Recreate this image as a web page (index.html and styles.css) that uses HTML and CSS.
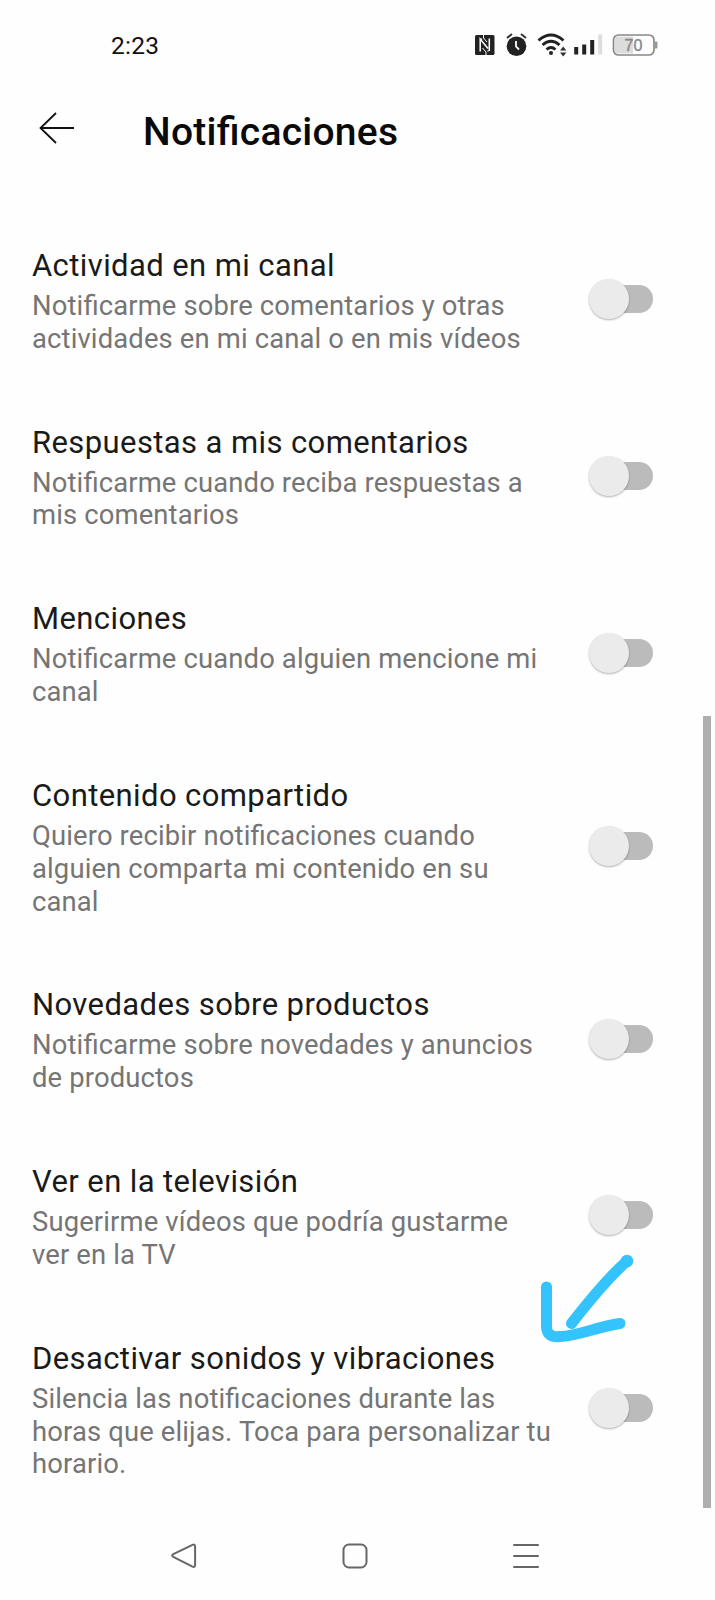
FILE: index.html
```
<!DOCTYPE html>
<html lang="es">
<head>
<meta charset="utf-8">
<title>Notificaciones</title>
<link rel="stylesheet" href="styles.css">
</head>
<body>

<div class="screen">
  <div class="status-bar">
    <span class="time">2:23</span>
    <svg class="status-icons" width="190" height="30" viewBox="0 0 190 30">
      <!-- nfc -->
      <rect x="5" y="5" width="19.500" height="20" rx="1.500" fill="#222"/>
      <path d="M10.200 21.500V9l7.800 9.500M19.300 8.500V21M11.500 9.500v-1M18 21.500v-1" fill="none" stroke="#fff" stroke-width="1.500"/>
      <path d="M13.500 4v4l3.500 4M16 26v-4l-3.500-4" fill="none" stroke="#fff" stroke-width="1"/>
      <!-- alarm -->
      <circle cx="46.500" cy="16.200" r="9.800" fill="#222"/>
      <path d="M37 8l5-4M56 8l-5-4" stroke="#333" stroke-width="2"/>
      <path d="M46 11v5.500l3 3" fill="none" stroke="#fff" stroke-width="1.800"/>
      <!-- wifi -->
      <path d="M68.500 10.500q12.500-11 25 0M72.500 15q8.500-7.500 17 0M76.500 19.500q4.500-4 9 0" fill="none" stroke="#222" stroke-width="2.800"/>
      <circle cx="81" cy="23" r="2" fill="#222"/>
      <path d="M90 20.500l3.200-4 3.200 4zM90 22.500l3.200 4 3.200-4z" fill="#333"/>
      <!-- signal -->
      <path d="M106.200 24.500v-7.500M114.200 24.500v-10M122.200 24.500v-14.500" stroke="#222" stroke-width="4"/>
      <path d="M130.200 24.500v-20" stroke="#ddd" stroke-width="4"/>
      <!-- battery -->
      <path d="M148 6.500h15v17h-15q-3 0-3-3v-11q0-3 3-3z" fill="#dcdcdc"/>
      <rect x="143.500" y="5" width="40.500" height="20" rx="5" fill="none" stroke="#888" stroke-width="1.700"/>
      <path d="M185 11.500h1.500q1 0 1 1v5q0 1-1 1h-1.500z" fill="#999"/>
      <text class="battery-text" x="163.500" y="20.500">70</text>
    </svg>
  </div>

  <div class="header">
    <svg class="back" width="36" height="32" viewBox="0 0 36 32">
      <path d="M1.500 16H35M17 1L1.500 16l15.500 15" fill="none" stroke="#111" stroke-width="1.800"/>
    </svg>
    <h1>Notificaciones</h1>
  </div>

  <div class="list">
    <div class="row">
      <div class="text">
        <h2>Actividad en mi canal</h2>
        <p>Notificarme sobre comentarios y otras<br>actividades en mi canal o en mis vídeos</p>
      </div>
      <div class="toggle"><span class="knob"></span></div>
    </div>
    <div class="row">
      <div class="text">
        <h2>Respuestas a mis comentarios</h2>
        <p>Notificarme cuando reciba respuestas a<br>mis comentarios</p>
      </div>
      <div class="toggle"><span class="knob"></span></div>
    </div>
    <div class="row">
      <div class="text">
        <h2>Menciones</h2>
        <p>Notificarme cuando alguien mencione mi<br>canal</p>
      </div>
      <div class="toggle"><span class="knob"></span></div>
    </div>
    <div class="row">
      <div class="text">
        <h2>Contenido compartido</h2>
        <p>Quiero recibir notificaciones cuando<br>alguien comparta mi contenido en su<br>canal</p>
      </div>
      <div class="toggle"><span class="knob"></span></div>
    </div>
    <div class="row">
      <div class="text">
        <h2>Novedades sobre productos</h2>
        <p>Notificarme sobre novedades y anuncios<br>de productos</p>
      </div>
      <div class="toggle"><span class="knob"></span></div>
    </div>
    <div class="row">
      <div class="text">
        <h2>Ver en la televisión</h2>
        <p>Sugerirme vídeos que podría gustarme<br>ver en la TV</p>
      </div>
      <div class="toggle"><span class="knob"></span></div>
    </div>
    <div class="row">
      <div class="text">
        <h2>Desactivar sonidos y vibraciones</h2>
        <p>Silencia las notificaciones durante las<br>horas que elijas. Toca para personalizar tu<br>horario.</p>
      </div>
      <div class="toggle"><span class="knob"></span></div>
    </div>
  </div>

  <div class="nav-bar">
    <svg width="26" height="26" viewBox="0 0 26 26">
      <path d="M21.500 1.900L2.300 11.200q-2.200 1.300 0 2.600L21.500 23.600q2.600 1 2.600-1.500V3.400q0-2.500-2.600-1.500z"/>
    </svg>
    <svg width="26" height="26" viewBox="0 0 26 26">
      <rect x="1.500" y="1.500" width="23" height="23" rx="5.500"/>
    </svg>
    <svg width="26" height="26" viewBox="0 0 26 26">
      <path d="M1 2h24M1 13h24M1 24h24"/>
    </svg>
  </div>

  <div class="scrollbar"></div>

  <svg class="arrow" width="120" height="110" viewBox="0 0 120 110">
    <path d="M26.500 47V86Q26.500 98 40 96.500C58 96 76 87 100 83.500"/>
    <path d="M107 21C90 36 69 61 51.500 83.500"/>
    <circle cx="107" cy="21" r="6.300"/>
  </svg>
</div>

</body>
</html>
```
FILE: styles.css
```
body {
  margin: 0;
  background-color: #fefefe;
  font-family: Roboto, sans-serif;
  font-feature-settings: "liga" 1;
}

.screen {
  position: relative;
  width: 715px;
  height: 1600px;
  overflow: hidden;
}

.status-bar {
  display: flex;
  justify-content: space-between;
  align-items: center;
  height: 90px;
  padding: 0 55px 0 111px;
  box-sizing: border-box;
}

.time {
  font-size: 24.500px;
  letter-spacing: 0.3px;
  color: #111;
}

.battery-text {
  font-family: "Liberation Sans", sans-serif;
  font-size: 16px;
  text-anchor: middle;
  fill: #888;
  stroke: #888;
  stroke-width: 0.4px;
}

.header {
  display: flex;
  align-items: center;
  height: 76px;
  padding-left: 39px;
}

h1 {
  margin: 7px 0 0 68px;
  font-size: 39px;
  font-weight: 500;
  line-height: 44px;
  letter-spacing: 0.25px;
  color: #0a0a0a;
}

.list {
  height: 1347px;
  padding-top: 45px;
  box-sizing: border-box;
}

.row {
  display: flex;
  justify-content: space-between;
  align-items: center;
  padding: 34.900px 62px 32.200px 32px;
}

.text {
  white-space: nowrap;
}

h2 {
  margin: 0 0 4px;
  font-size: 31px;
  font-weight: 400;
  line-height: 40px;
  letter-spacing: 0.4px;
  color: #1a1a1a;
}

p {
  margin: 0;
  font-size: 27.400px;
  line-height: 32.800px;
  letter-spacing: 0.15px;
  color: #757575;
}

.toggle {
  display: flex;
  align-items: center;
  width: 60px;
  height: 28px;
  margin-bottom: 3px;
  border-radius: 14px;
  background-color: #bbb;
}

.knob {
  flex: none;
  width: 40px;
  height: 40px;
  margin-left: -4px;
  border-radius: 50%;
  background-color: #ebebeb;
  box-shadow: 0 1px 2px rgba(0, 0, 0, 0.3);
}

.nav-bar {
  display: flex;
  gap: 145px;
  padding: 30px 0 0 171px;
}

.nav-bar svg {
  fill: none;
  stroke: #666;
  stroke-width: 2;
  stroke-linecap: round;
}

.scrollbar {
  position: absolute;
  top: 716px;
  left: 703px;
  width: 8px;
  height: 792px;
  background-color: #afafaf;
}

/* hand-drawn arrow on top of the list */
.arrow {
  position: absolute;
  top: 1240px;
  left: 520px;
  fill: none;
  stroke: #34c3fc;
  stroke-width: 11;
  stroke-linecap: round;
}

.arrow circle {
  fill: #34c3fc;
  stroke: none;
}
```
